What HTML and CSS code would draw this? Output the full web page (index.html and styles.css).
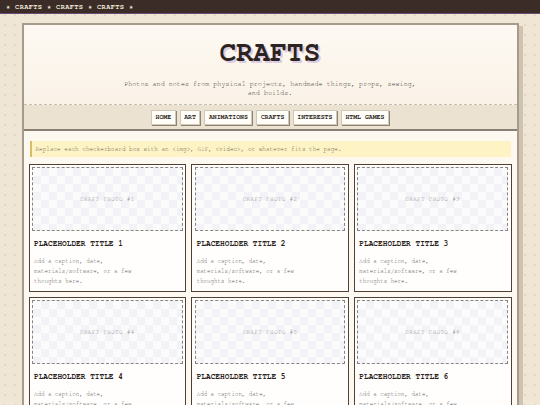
FILE: index.html
```html
<!DOCTYPE html>
<html lang="en">
<head>
<meta charset="utf-8">
<title>Crafts</title>
<link rel="stylesheet" href="styles.css">
</head>
<body>
<div class="topbar">★ CRAFTS ★ CRAFTS ★ CRAFTS ★</div>
<div class="page">
  <header class="header">
    <h1 class="title">CRAFTS</h1>
    <p class="subtitle">Photos and notes from physical projects, handmade things, props, sewing,<br>and builds.</p>
  </header>
  <nav class="nav">
    <a class="btn">HOME</a>
    <a class="btn">ART</a>
    <a class="btn">ANIMATIONS</a>
    <a class="btn">CRAFTS</a>
    <a class="btn">INTERESTS</a>
    <a class="btn">HTML GAMES</a>
  </nav>
  <main class="content">
    <div class="notice">Replace each checkerboard box with an &lt;img&gt;, GIF, &lt;video&gt;, or whatever fits the page.</div>
    <div class="grid">
      <div class="card"><div class="photo">CRAFT PHOTO #1</div><h2 class="ctitle">PLACEHOLDER TITLE 1</h2><p class="cap">Add a caption, date,<br>materials/software, or a few<br>thoughts here.</p></div>
      <div class="card"><div class="photo">CRAFT PHOTO #2</div><h2 class="ctitle">PLACEHOLDER TITLE 2</h2><p class="cap">Add a caption, date,<br>materials/software, or a few<br>thoughts here.</p></div>
      <div class="card"><div class="photo">CRAFT PHOTO #3</div><h2 class="ctitle">PLACEHOLDER TITLE 3</h2><p class="cap">Add a caption, date,<br>materials/software, or a few<br>thoughts here.</p></div>
      <div class="card"><div class="photo">CRAFT PHOTO #4</div><h2 class="ctitle">PLACEHOLDER TITLE 4</h2><p class="cap">Add a caption, date,<br>materials/software, or a few<br>thoughts here.</p></div>
      <div class="card"><div class="photo">CRAFT PHOTO #5</div><h2 class="ctitle">PLACEHOLDER TITLE 5</h2><p class="cap">Add a caption, date,<br>materials/software, or a few<br>thoughts here.</p></div>
      <div class="card"><div class="photo">CRAFT PHOTO #6</div><h2 class="ctitle">PLACEHOLDER TITLE 6</h2><p class="cap">Add a caption, date,<br>materials/software, or a few<br>thoughts here.</p></div>
    </div>
  </main>
</div>
</body>
</html>
```
FILE: styles.css
```css
html, body { margin: 0; padding: 0; }
body {
  background-color: #efe6d6;
  background-image: radial-gradient(circle, #e2d8c6 0.8px, transparent 1.2px);
  background-size: 10px 10px;
  font-family: "Nimbus Mono PS", "Nimbus Mono L", FreeMono, "Courier 10 Pitch", "Liberation Mono", monospace;
  color: #333;
  overflow: hidden;
}
.topbar {
  background: #3b2c27;
  border-bottom: 1px solid #6b4a78;
  color: #f3ebdf;
  font-weight: bold;
  font-size: 7px;
  letter-spacing: 0.35px;
  height: 13px;
  line-height: 13px;
  padding-left: 6px;
  white-space: nowrap;
}
.page {
  width: 493px;
  margin: 9px auto 0;
  border: 2px solid #a69b8b;
  box-shadow: 4px 3px 0 #cfc4b2;
  background: #fdf8f0;
}
.header {
  background: linear-gradient(#fdf9f2, #faf2e7);
  border-bottom: 1px dashed #c9bfb1;
  text-align: center;
  padding: 13px 0 6px;
}
.title {
  margin: 0;
  font-size: 28px;
  line-height: 30px;
  font-weight: bold;
  color: #2b2421;
  text-shadow: 2px 2px 0 #dccbe0;
}
.subtitle {
  margin: 12px 0 0;
  font-size: 6.75px;
  line-height: 9px;
  color: #403a36;
}
.nav {
  background: #ece2d2;
  border-bottom: 2px solid #8a7f72;
  display: flex;
  justify-content: center;
  gap: 4px;
  padding: 5px 0 4px;
}
.btn {
  background: #fffdf8;
  border: 1px solid #d2c8b8;
  box-shadow: 1px 1px 0 #8f8376;
  font-size: 6.5px;
  font-weight: bold;
  color: #2a2522;
  padding: 0 3.5px;
  height: 13px;
  line-height: 13px;
}
.content {
  padding: 10px 5px 10px;
}
.notice {
  background: #fdf3c4;
  border-left: 2px solid #d9bd6c;
  margin: 0 1px 7px;
  padding: 0 4px;
  height: 16px;
  line-height: 16px;
  font-size: 6px;
  color: #6a6456;
  white-space: nowrap;
}
.grid {
  display: grid;
  grid-template-columns: repeat(3, 1fr);
  gap: 5px;
}
.card {
  background: #fffefc;
  border: 1.5px solid #4f4038;
  padding: 2px 2.5px 0;
  height: 124px;
}
.photo {
  height: 62px;
  border: 1px dashed #8a8580;
  background-color: #fbfbfb;
  background-image: conic-gradient(#f3f2f7 25%, transparent 0 50%, #f3f2f7 0 75%, transparent 0);
  background-size: 16px 16px;
  display: flex;
  align-items: center;
  justify-content: center;
  font-size: 6px;
  letter-spacing: 0.3px;
  color: #8e8a88;
}
.ctitle {
  margin: 7px 0 0 2px;
  font-size: 7.8px;
  line-height: 12px;
  font-weight: bold;
  color: #2a2320;
}
.cap {
  margin: 6px 0 0 2px;
  font-size: 5.8px;
  line-height: 10px;
  color: #5e5854;
}
```
